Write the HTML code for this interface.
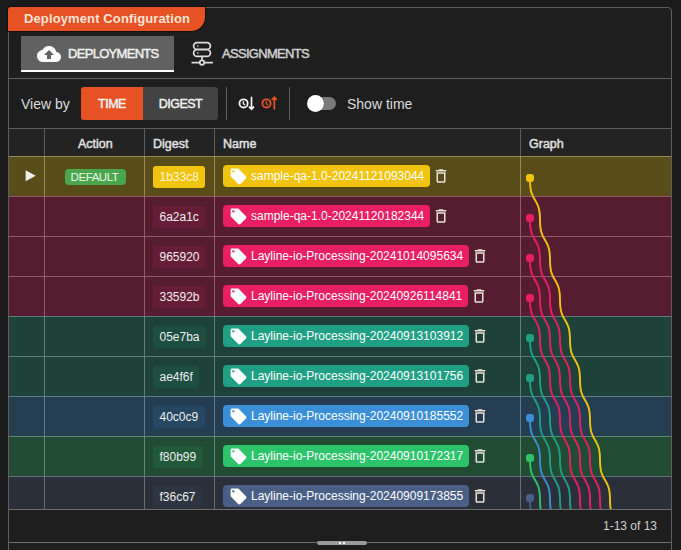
<!DOCTYPE html>
<html><head><meta charset="utf-8">
<style>
*{box-sizing:border-box;margin:0;padding:0}
html,body{width:681px;height:550px;overflow:hidden;background:#1b1b1b;font-family:"Liberation Sans",sans-serif;color:#e6e6e6}
#panel{position:absolute;left:8px;top:7px;width:664px;height:600px;border:1px solid #5e5e5e;border-radius:4px;background:#1e1e1e}
#otab{position:absolute;left:8px;top:7px;width:197px;height:24px;background:#e65224;border-radius:3px 0 14px 0;color:#fbe3d8;font-weight:700;font-size:13px;letter-spacing:0.12px;line-height:23px;padding-left:16px;box-shadow:0 0 1px 1px #111}
.tab{position:absolute;top:36px;height:36px;font-size:13px;letter-spacing:-0.7px;color:#f2f2f2;line-height:34px;-webkit-text-stroke:0.45px currentColor}
#t1{left:21px;width:153px;background:#616161;border-bottom:2px solid #fff}
#t2{left:183px;width:140px;color:#d2d2d2}
.hl{position:absolute;left:9px;width:662px;height:1px;background:#5e5e5e}
.vl{position:absolute;width:1px;background:#5e5e5e}
.hl.g{background:#6e6e6e}
.hl.gi{left:0;background:#747474}
.vl.gi{top:0;height:353px;background:#747474}
#viewby{position:absolute;left:21px;top:95.5px;font-size:14px;color:#dcdcdc;line-height:16px}
#seg{position:absolute;left:81px;top:87px;width:137px;height:33px;border-radius:3px;overflow:hidden;background:#434343;font-size:12.5px;letter-spacing:-0.5px;-webkit-text-stroke:0.45px currentColor;line-height:35px;color:#f2f2f2}
#seg .a{position:absolute;left:0;top:0;width:62px;height:33px;background:#e65224;text-align:center}
#seg .b{position:absolute;left:62px;top:0;width:75px;height:33px;text-align:center}
#showtime{position:absolute;left:347px;top:95.5px;font-size:14px;color:#dcdcdc;line-height:16px}
.track{position:absolute;left:309px;top:97px;width:27px;height:13px;border-radius:7px;background:#7b7b7b}
.knob{position:absolute;left:306.75px;top:94.75px;width:17.5px;height:17.5px;border-radius:50%;background:#fff;box-shadow:0 0 2px rgba(0,0,0,0.4)}
#hdr{position:absolute;left:9px;top:129px;width:662px;height:27px;background:#232323}
.th{position:absolute;top:135.5px;font-size:12.5px;-webkit-text-stroke:0.45px currentColor;color:#e2e2e2;line-height:16px}
#tbody{position:absolute;left:9px;top:156px;width:662px;height:353px;overflow:hidden}
.row{position:absolute;left:0;width:662px;height:40px}
.row .dg{position:absolute;left:144px;top:10px;height:22px;padding:0 6.5px;border-radius:3px;font-size:12px;line-height:22px}
.row .nm{position:absolute;left:214px;top:9px;height:22px;display:flex;align-items:center}
.row .tag{position:relative;height:22px;border-radius:4px;padding:0 6px 0 28px;font-size:12px;line-height:22px;color:#fff;white-space:nowrap}
.row .tag .ti{position:absolute;left:5.5px;top:1.5px}
.row .tr{margin-left:2px}
.play{position:absolute;left:16px;top:14px}
.def{position:absolute;left:56px;top:13px;width:61px;height:16px;padding-right:2px;border-radius:4px;background:#4aa74e;color:#edf8e8;font-size:11.6px;letter-spacing:-0.5px;line-height:15px;text-align:center}
#foot{position:absolute;left:603px;top:519px;font-size:12px;color:#d0d0d0;line-height:14px}
#handle{position:absolute;left:317px;top:541px;width:50px;height:4px;border-radius:2px;background:#9a9a9a}
.hd{position:absolute;top:542px;width:2px;height:2px;background:#fff}

</style></head><body>
<div id="panel"></div>
<div id="otab">Deployment Configuration</div>
<div class="tab" id="t1"><svg style="position:absolute;left:16px;top:6px" width="24" height="24" viewBox="0 0 24 24"><path fill="#fff" d="M19.35 10.04C18.67 6.59 15.64 4 12 4 9.11 4 6.6 5.64 5.35 8.04 2.34 8.36 0 10.91 0 14c0 3.31 2.69 6 6 6h13c2.76 0 5-2.24 5-5 0-2.64-2.05-4.78-4.65-4.96zM14 13v4h-4v-4H7l5-5 5 5h-3z"/></svg><span style="position:absolute;left:47px;top:1px">DEPLOYMENTS</span></div>
<div class="tab" id="t2"><span style="position:absolute;left:39px;top:1px">ASSIGNMENTS</span></div>
<svg style="position:absolute;left:0;top:0" width="230" height="80" viewBox="0 0 230 80" fill="none" stroke="#dcdcdc" stroke-width="1.7"><path d="M197 42.6h10a3.4 3.4 0 0 1 0 6.8h-10a3.4 3.4 0 0 1 0-6.8zM197 49.6h10a3.4 3.4 0 0 1 0 6.8h-10a3.4 3.4 0 0 1 0-6.8z"/><path d="M202 56.6v3.6M191.5 62.6h8M204.5 62.6h8.5"/><circle cx="202" cy="62.6" r="2.3"/><path d="M197.2 46h1.2M197.2 53h1.2" stroke-width="1.6"/></svg>
<div class="hl" style="top:78px"></div>
<div id="viewby">View by</div>
<div id="seg"><div class="a">TIME</div><div class="b">DIGEST</div></div>
<div class="vl" style="left:226px;top:87px;height:33px"></div>
<svg style="position:absolute;left:236px;top:94px" width="44" height="18" viewBox="0 0 44 18">
<circle cx="7.6" cy="9.4" r="4.1" fill="none" stroke="#f4f4f4" stroke-width="1.8"/><path d="M7.4 7.2v2.5l1.7 1.3" stroke="#f4f4f4" stroke-width="1.3" fill="none"/>
<path d="M15.5 2.8v12.4M13 12.6l2.5 2.6 2.5-2.6" stroke="#f4f4f4" stroke-width="1.7" fill="none"/>
<circle cx="30.5" cy="9.4" r="4.1" fill="none" stroke="#e65224" stroke-width="1.8"/><path d="M30.3 7.2v2.5l1.7 1.3" stroke="#e65224" stroke-width="1.3" fill="none"/>
<path d="M38.3 15.6V3.2M35.8 5.8l2.5-2.6 2.5 2.6" stroke="#e65224" stroke-width="1.7" fill="none"/>
</svg>
<div class="vl" style="left:289px;top:87px;height:33px"></div>
<div class="track"></div><div class="knob"></div>
<div id="showtime">Show time</div>
<div class="hl" style="top:128px"></div>
<div id="hdr"></div>
<div class="th" style="left:78px">Action</div>
<div class="th" style="left:153px">Digest</div>
<div class="th" style="left:223px">Name</div>
<div class="th" style="left:529px">Graph</div>
<div id="tbody" style="background:#1e1e1e">
<div class="hl gi" style="top:0px"></div>
<div class="hl gi" style="top:40px"></div>
<div class="hl gi" style="top:80px"></div>
<div class="hl gi" style="top:120px"></div>
<div class="hl gi" style="top:160px"></div>
<div class="hl gi" style="top:200px"></div>
<div class="hl gi" style="top:240px"></div>
<div class="hl gi" style="top:280px"></div>
<div class="hl gi" style="top:320px"></div>
<div class="vl gi" style="left:35px"></div>
<div class="vl gi" style="left:135px"></div>
<div class="vl gi" style="left:205px"></div>
<div class="vl gi" style="left:511px"></div>
<div class="row" style="top:0px;background:rgba(241,196,15,0.28)"><svg class="play" width="12" height="12" viewBox="0 0 12 12"><path d="M0.6 0.3L10.8 5.8L0.6 11.3Z" fill="#eee"/></svg><div class="def">DEFAULT</div><div class="dg" style="background:#f1c40f;color:#fff6d8">1b33c8</div><div class="nm"><div class="tag" style="background:#f1c40f"><svg class="ti" viewBox="0 0 24 24" width="19" height="19"><path fill="#fff" d="M21.41 11.58l-9-9C12.05 2.22 11.55 2 11 2H4c-1.1 0-2 .9-2 2v7c0 .55.22 1.05.59 1.42l9 9c.36.36.86.58 1.41.58s1.05-.22 1.41-.59l7-7c.37-.36.59-.86.59-1.41s-.23-1.06-.59-1.42zM5.5 7C4.670 7 4 6.33 4 5.5S4.67 4 5.5 4 7 4.67 7 5.5 6.33 7 5.5 7z"/></svg><span>sample-qa-1.0-20241121093044</span></div><svg class="tr" viewBox="0 0 24 24" width="18" height="18"><path fill="#e8e2d8" d="M16 9v10H8V9h8m-1.5-6h-5l-1 1H5v2h14V4h-3.5l-1-1zM18 7H6v12c0 1.1.9 2 2 2h8c1.1 0 2-.9 2-2V7z"/></svg></div></div>
<div class="row" style="top:40px;background:rgba(233,30,99,0.28)"><div class="dg" style="background:rgba(233,30,99,0.12);color:#eeeeee">6a2a1c</div><div class="nm"><div class="tag" style="background:#e91e63"><svg class="ti" viewBox="0 0 24 24" width="19" height="19"><path fill="#fff" d="M21.41 11.58l-9-9C12.05 2.22 11.55 2 11 2H4c-1.1 0-2 .9-2 2v7c0 .55.22 1.05.59 1.42l9 9c.36.36.86.58 1.41.58s1.05-.22 1.41-.59l7-7c.37-.36.59-.86.59-1.41s-.23-1.06-.59-1.42zM5.5 7C4.670 7 4 6.33 4 5.5S4.67 4 5.5 4 7 4.67 7 5.5 6.33 7 5.5 7z"/></svg><span>sample-qa-1.0-20241120182344</span></div><svg class="tr" viewBox="0 0 24 24" width="18" height="18"><path fill="#e8e2d8" d="M16 9v10H8V9h8m-1.5-6h-5l-1 1H5v2h14V4h-3.5l-1-1zM18 7H6v12c0 1.1.9 2 2 2h8c1.1 0 2-.9 2-2V7z"/></svg></div></div>
<div class="row" style="top:80px;background:rgba(233,30,99,0.28)"><div class="dg" style="background:rgba(233,30,99,0.12);color:#eeeeee">965920</div><div class="nm"><div class="tag" style="background:#e91e63"><svg class="ti" viewBox="0 0 24 24" width="19" height="19"><path fill="#fff" d="M21.41 11.58l-9-9C12.05 2.22 11.55 2 11 2H4c-1.1 0-2 .9-2 2v7c0 .55.22 1.05.59 1.42l9 9c.36.36.86.58 1.41.58s1.05-.22 1.41-.59l7-7c.37-.36.59-.86.59-1.41s-.23-1.06-.59-1.42zM5.5 7C4.670 7 4 6.33 4 5.5S4.67 4 5.5 4 7 4.67 7 5.5 6.33 7 5.5 7z"/></svg><span>Layline-io-Processing-20241014095634</span></div><svg class="tr" viewBox="0 0 24 24" width="18" height="18"><path fill="#e8e2d8" d="M16 9v10H8V9h8m-1.5-6h-5l-1 1H5v2h14V4h-3.5l-1-1zM18 7H6v12c0 1.1.9 2 2 2h8c1.1 0 2-.9 2-2V7z"/></svg></div></div>
<div class="row" style="top:120px;background:rgba(233,30,99,0.28)"><div class="dg" style="background:rgba(233,30,99,0.12);color:#eeeeee">33592b</div><div class="nm"><div class="tag" style="background:#e91e63"><svg class="ti" viewBox="0 0 24 24" width="19" height="19"><path fill="#fff" d="M21.41 11.58l-9-9C12.05 2.22 11.55 2 11 2H4c-1.1 0-2 .9-2 2v7c0 .55.22 1.05.59 1.42l9 9c.36.36.86.58 1.41.58s1.05-.22 1.41-.59l7-7c.37-.36.59-.86.59-1.41s-.23-1.06-.59-1.42zM5.5 7C4.670 7 4 6.33 4 5.5S4.67 4 5.5 4 7 4.67 7 5.5 6.33 7 5.5 7z"/></svg><span>Layline-io-Processing-20240926114841</span></div><svg class="tr" viewBox="0 0 24 24" width="18" height="18"><path fill="#e8e2d8" d="M16 9v10H8V9h8m-1.5-6h-5l-1 1H5v2h14V4h-3.5l-1-1zM18 7H6v12c0 1.1.9 2 2 2h8c1.1 0 2-.9 2-2V7z"/></svg></div></div>
<div class="row" style="top:160px;background:rgba(31,160,133,0.28)"><div class="dg" style="background:rgba(31,160,133,0.12);color:#eeeeee">05e7ba</div><div class="nm"><div class="tag" style="background:#1fa085"><svg class="ti" viewBox="0 0 24 24" width="19" height="19"><path fill="#fff" d="M21.41 11.58l-9-9C12.05 2.22 11.55 2 11 2H4c-1.1 0-2 .9-2 2v7c0 .55.22 1.05.59 1.42l9 9c.36.36.86.58 1.41.58s1.05-.22 1.41-.59l7-7c.37-.36.59-.86.59-1.41s-.23-1.06-.59-1.42zM5.5 7C4.670 7 4 6.33 4 5.5S4.67 4 5.5 4 7 4.67 7 5.5 6.33 7 5.5 7z"/></svg><span>Layline-io-Processing-20240913103912</span></div><svg class="tr" viewBox="0 0 24 24" width="18" height="18"><path fill="#e8e2d8" d="M16 9v10H8V9h8m-1.5-6h-5l-1 1H5v2h14V4h-3.5l-1-1zM18 7H6v12c0 1.1.9 2 2 2h8c1.1 0 2-.9 2-2V7z"/></svg></div></div>
<div class="row" style="top:200px;background:rgba(31,160,133,0.28)"><div class="dg" style="background:rgba(31,160,133,0.12);color:#eeeeee">ae4f6f</div><div class="nm"><div class="tag" style="background:#1fa085"><svg class="ti" viewBox="0 0 24 24" width="19" height="19"><path fill="#fff" d="M21.41 11.58l-9-9C12.05 2.22 11.55 2 11 2H4c-1.1 0-2 .9-2 2v7c0 .55.22 1.05.59 1.42l9 9c.36.36.86.58 1.41.58s1.05-.22 1.41-.59l7-7c.37-.36.59-.86.59-1.41s-.23-1.06-.59-1.42zM5.5 7C4.670 7 4 6.33 4 5.5S4.67 4 5.5 4 7 4.67 7 5.5 6.33 7 5.5 7z"/></svg><span>Layline-io-Processing-20240913101756</span></div><svg class="tr" viewBox="0 0 24 24" width="18" height="18"><path fill="#e8e2d8" d="M16 9v10H8V9h8m-1.5-6h-5l-1 1H5v2h14V4h-3.5l-1-1zM18 7H6v12c0 1.1.9 2 2 2h8c1.1 0 2-.9 2-2V7z"/></svg></div></div>
<div class="row" style="top:240px;background:rgba(58,143,216,0.28)"><div class="dg" style="background:rgba(58,143,216,0.12);color:#eeeeee">40c0c9</div><div class="nm"><div class="tag" style="background:#3a8fd8"><svg class="ti" viewBox="0 0 24 24" width="19" height="19"><path fill="#fff" d="M21.41 11.58l-9-9C12.05 2.22 11.55 2 11 2H4c-1.1 0-2 .9-2 2v7c0 .55.22 1.05.59 1.42l9 9c.36.36.86.58 1.41.58s1.05-.22 1.41-.59l7-7c.37-.36.59-.86.59-1.41s-.23-1.06-.59-1.42zM5.5 7C4.670 7 4 6.33 4 5.5S4.67 4 5.5 4 7 4.67 7 5.5 6.33 7 5.5 7z"/></svg><span>Layline-io-Processing-20240910185552</span></div><svg class="tr" viewBox="0 0 24 24" width="18" height="18"><path fill="#e8e2d8" d="M16 9v10H8V9h8m-1.5-6h-5l-1 1H5v2h14V4h-3.5l-1-1zM18 7H6v12c0 1.1.9 2 2 2h8c1.1 0 2-.9 2-2V7z"/></svg></div></div>
<div class="row" style="top:280px;background:rgba(44,196,107,0.28)"><div class="dg" style="background:rgba(44,196,107,0.12);color:#eeeeee">f80b99</div><div class="nm"><div class="tag" style="background:#2cc46b"><svg class="ti" viewBox="0 0 24 24" width="19" height="19"><path fill="#fff" d="M21.41 11.58l-9-9C12.05 2.22 11.55 2 11 2H4c-1.1 0-2 .9-2 2v7c0 .55.22 1.05.59 1.42l9 9c.36.36.86.58 1.41.58s1.05-.22 1.41-.59l7-7c.37-.36.59-.86.59-1.41s-.23-1.06-.59-1.42zM5.5 7C4.670 7 4 6.33 4 5.5S4.67 4 5.5 4 7 4.67 7 5.5 6.33 7 5.5 7z"/></svg><span>Layline-io-Processing-20240910172317</span></div><svg class="tr" viewBox="0 0 24 24" width="18" height="18"><path fill="#e8e2d8" d="M16 9v10H8V9h8m-1.5-6h-5l-1 1H5v2h14V4h-3.5l-1-1zM18 7H6v12c0 1.1.9 2 2 2h8c1.1 0 2-.9 2-2V7z"/></svg></div></div>
<div class="row" style="top:320px;background:rgba(74,95,133,0.28)"><div class="dg" style="background:rgba(74,95,133,0.12);color:#eeeeee">f36c67</div><div class="nm"><div class="tag" style="background:#4a5f85"><svg class="ti" viewBox="0 0 24 24" width="19" height="19"><path fill="#fff" d="M21.41 11.58l-9-9C12.05 2.22 11.55 2 11 2H4c-1.1 0-2 .9-2 2v7c0 .55.22 1.05.59 1.42l9 9c.36.36.86.58 1.41.58s1.05-.22 1.41-.59l7-7c.37-.36.59-.86.59-1.41s-.23-1.06-.59-1.42zM5.5 7C4.670 7 4 6.33 4 5.5S4.67 4 5.5 4 7 4.67 7 5.5 6.33 7 5.5 7z"/></svg><span>Layline-io-Processing-20240909173855</span></div><svg class="tr" viewBox="0 0 24 24" width="18" height="18"><path fill="#e8e2d8" d="M16 9v10H8V9h8m-1.5-6h-5l-1 1H5v2h14V4h-3.5l-1-1zM18 7H6v12c0 1.1.9 2 2 2h8c1.1 0 2-.9 2-2V7z"/></svg></div></div>
<svg style="position:absolute;left:-9px;top:-156px" width="681" height="550"><path d="M530,178 L530,180 C530,204 540,196 540,220 C540,244 550,236 550,260 C550,284 560,276 560,300 C560,324 570,316 570,340 C570,364 580,356 580,380 C580,404 590,396 590,420 C590,444 600,436 600,460 C600,484 610,476 610,500 C610,524 620,516 620,540 C620,564 630,556 630,580 C630,604 640,596 640,620 C640,644 650,636 650,660 C650,684 660,676 660,700 C660,724 670,716 670,740" stroke="#f1c40f" stroke-width="1.9" fill="none"/>
<path d="M530,218 L530,220 C530,244 540,236 540,260 C540,284 550,276 550,300 C550,324 560,316 560,340 C560,364 570,356 570,380 C570,404 580,396 580,420 C580,444 590,436 590,460 C590,484 600,476 600,500 C600,524 610,516 610,540 C610,564 620,556 620,580 C620,604 630,596 630,620 C630,644 640,636 640,660 C640,684 650,676 650,700 C650,724 660,716 660,740" stroke="#e91e63" stroke-width="1.9" fill="none"/>
<path d="M530,258 L530,260 C530,284 540,276 540,300 C540,324 550,316 550,340 C550,364 560,356 560,380 C560,404 570,396 570,420 C570,444 580,436 580,460 C580,484 590,476 590,500 C590,524 600,516 600,540 C600,564 610,556 610,580 C610,604 620,596 620,620 C620,644 630,636 630,660 C630,684 640,676 640,700 C640,724 650,716 650,740" stroke="#e91e63" stroke-width="1.9" fill="none"/>
<path d="M530,298 L530,300 C530,324 540,316 540,340 C540,364 550,356 550,380 C550,404 560,396 560,420 C560,444 570,436 570,460 C570,484 580,476 580,500 C580,524 590,516 590,540 C590,564 600,556 600,580 C600,604 610,596 610,620 C610,644 620,636 620,660 C620,684 630,676 630,700 C630,724 640,716 640,740" stroke="#e91e63" stroke-width="1.9" fill="none"/>
<path d="M530,338 L530,340 C530,364 540,356 540,380 C540,404 550,396 550,420 C550,444 560,436 560,460 C560,484 570,476 570,500 C570,524 580,516 580,540 C580,564 590,556 590,580 C590,604 600,596 600,620 C600,644 610,636 610,660 C610,684 620,676 620,700 C620,724 630,716 630,740" stroke="#1fa085" stroke-width="1.9" fill="none"/>
<path d="M530,378 L530,380 C530,404 540,396 540,420 C540,444 550,436 550,460 C550,484 560,476 560,500 C560,524 570,516 570,540 C570,564 580,556 580,580 C580,604 590,596 590,620 C590,644 600,636 600,660 C600,684 610,676 610,700 C610,724 620,716 620,740" stroke="#1fa085" stroke-width="1.9" fill="none"/>
<path d="M530,418 L530,420 C530,444 540,436 540,460 C540,484 550,476 550,500 C550,524 560,516 560,540 C560,564 570,556 570,580 C570,604 580,596 580,620 C580,644 590,636 590,660 C590,684 600,676 600,700 C600,724 610,716 610,740" stroke="#3a8fd8" stroke-width="1.9" fill="none"/>
<path d="M530,458 L530,460 C530,484 540,476 540,500 C540,524 550,516 550,540 C550,564 560,556 560,580 C560,604 570,596 570,620 C570,644 580,636 580,660 C580,684 590,676 590,700 C590,724 600,716 600,740" stroke="#2cc46b" stroke-width="1.9" fill="none"/>
<path d="M530,498 L530,500 C530,524 540,516 540,540 C540,564 550,556 550,580 C550,604 560,596 560,620 C560,644 570,636 570,660 C570,684 580,676 580,700 C580,724 590,716 590,740" stroke="#4a5f85" stroke-width="1.9" fill="none"/>
<rect x="526" y="174" width="8" height="8" rx="3" fill="#f1c40f"/>
<rect x="526" y="214" width="8" height="8" rx="3" fill="#e91e63"/>
<rect x="526" y="254" width="8" height="8" rx="3" fill="#e91e63"/>
<rect x="526" y="294" width="8" height="8" rx="3" fill="#e91e63"/>
<rect x="526" y="334" width="8" height="8" rx="3" fill="#1fa085"/>
<rect x="526" y="374" width="8" height="8" rx="3" fill="#1fa085"/>
<rect x="526" y="414" width="8" height="8" rx="3" fill="#3a8fd8"/>
<rect x="526" y="454" width="8" height="8" rx="3" fill="#2cc46b"/>
<rect x="526" y="494" width="8" height="8" rx="3" fill="#4a5f85"/></svg>
</div>
<div class="hl g" style="top:509px"></div>
<div class="hl g" style="top:542px"></div>
<div class="vl" style="left:44px;top:129px;height:27px"></div>
<div class="vl" style="left:144px;top:129px;height:27px"></div>
<div class="vl" style="left:214px;top:129px;height:27px"></div>
<div class="vl" style="left:520px;top:129px;height:27px"></div>
<div id="foot">1-13 of 13</div>
<div id="handle"></div><div class="hd" style="left:339px"></div><div class="hd" style="left:343px"></div>

</body></html>
